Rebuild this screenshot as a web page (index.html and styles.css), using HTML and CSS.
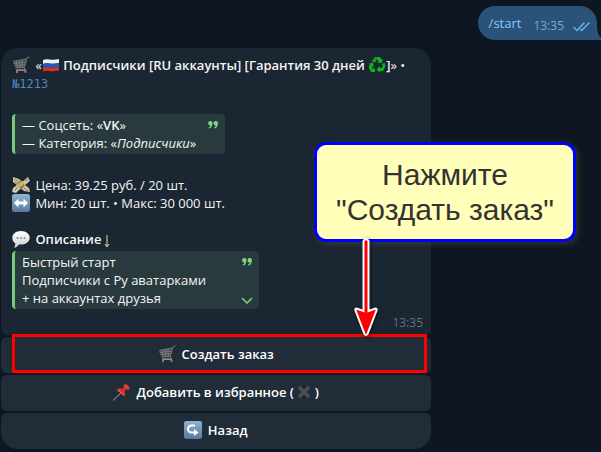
FILE: index.html
```
<!DOCTYPE html>
<html lang="ru">

<head>
    <meta charset="UTF-8" />
    <meta name="viewport" content="width=device-width, initial-scale=1.0" />
    <title>Чат с ботом</title>
    <link rel="stylesheet" href="styles.css">
</head>

<body>
    <!-- общие иконки -->
    <svg class="sprite" aria-hidden="true">
        <defs>
            <linearGradient id="key-fill" x1="0" y1="0" x2="0" y2="1">
                <stop offset="0" stop-color="#8fb4d3" />
                <stop offset="1" stop-color="#58799b" />
            </linearGradient>
            <linearGradient id="bubble-fill" x1="0" y1="0" x2="0" y2="1">
                <stop offset="0" stop-color="#ffffff" />
                <stop offset="1" stop-color="#cfcfcf" />
            </linearGradient>
        </defs>
        <symbol id="cart" viewBox="0 0 18 18">
            <path d="M1 5.5L14 3l-1.600 8.500-9 .5z" fill="#45484b" />
            <path d="M1 5.500L14 3M1.600 7.500l12-1.500M2.300 9.500l10.700-.800M3.400 12l9-.5M4 5l1.500 7M7 4.500L8 12M10 4l.3 7.800M17.500 1L15 1.800 12.400 11.500 13.500 14H4" fill="none" stroke="#85888a" stroke-width=".8" />
            <path d="M4 14.200h10" stroke="#b1aaa3" stroke-width="1" />
            <circle cx="5" cy="16" r="1.200" fill="#8f7770" />
            <circle cx="13.500" cy="15.800" r="1.200" fill="#8f7770" />
        </symbol>
        <symbol id="quote" viewBox="0 0 10 8">
            <path d="M2.300 0a2.200 2.200 0 0 1 2.200 2.400C4.500 5 3.200 7 1 7.500L.6 6.600C1.700 6 2.200 5.300 2.300 4.400A2.200 2.200 0 0 1 2.300 0zM7.700 0a2.200 2.200 0 0 1 2.200 2.400C9.900 5 8.600 7 6.400 7.500L6 6.600C7.100 6 7.600 5.300 7.700 4.400A2.200 2.200 0 0 1 7.700 0z" fill="#7fd67c" />
        </symbol>
    </svg>

    <main class="chat">
        <div class="message-out">
            <a class="command" href="#start">/start</a>
            <span class="time">13:35</span>
            <svg class="checks" viewBox="0 0 18 10"><path d="M1 5.500l3 3L11 1M7.500 7.500l1 1L16 1" fill="none" stroke="#65b5ef" stroke-width="1.500" stroke-linecap="round" /></svg>
            <svg class="tail" viewBox="0 0 6 14"><path d="M0 0c0 7 2 11 6 14H0z" /></svg>
        </div>

        <div class="message">
            <div class="bubble">
                <p class="title">
                    <svg class="emoji"><use href="#cart" /></svg>
                    «<svg class="emoji flag" viewBox="0 0 18 18"><path d="M1 4c4-2 8 1 16-1v4c-8 2-12-1-16 1z" fill="#f1f1f1" /><path d="M1 8c4-2 8 1 16-1v4c-8 2-12-1-16 1z" fill="#2457bd" /><path d="M1 12c4-2 8 1 16-1v3.500c-8 2-12-1-16 1z" fill="#d82f2a" /></svg>
                    <b>Подписчики [RU аккаунты] [Гарантия 30 дней</b>
                    <svg class="emoji recycle" viewBox="0 0 18 18"><g fill="#09b51c"><path d="M5 4l2-3h5l1.500 2.500 1.500-.8-1.500 4.600-4.500-1 1.500-.9L9 3 7.500 5.500z" /><path d="M5 4l2-3h2.500L6.800 6.800 3.500 5z" fill="#3d8b35" /><path d="M14 8l2.500-1.200 1 3.200-2.400 5H12v1.800L8.500 13.500 12 10v2h1.500l1.300-2z" /><path d="M7 16H3L.5 11 2 8.500.5 7.800 5 6.500l1 4.500-1.400-.8-.6 1 .8 1.300H7z" /></g></svg><b>]</b>» •
                </p>
                <p><code>№1213</code></p>
                <blockquote class="quote quote-short">
                    <svg class="quote-mark"><use href="#quote" /></svg>
                    — Соцсеть: «<b>VK</b>»<br>
                    — Категория: «<i>Подписчики</i>»
                </blockquote>
                <p class="gap">
                    <svg class="emoji" viewBox="0 0 18 18"><path d="M1 1l6 2 3 3 6-5 2 4-5 4 4 3 1 4-6-1-3-3-5 5-4-1 1-4 4-3-4-3z" fill="#cfc8aa" /><path d="M2 3l4 2M13 5l3-2M3 14l3-3M12 12l4 3M3 6l3 2" stroke="#777b68" /><path d="M5 7l4-3 4 6-4 4z" fill="#8c8467" /><path d="M6 8l4-3 2.500 2-4.500 4z" fill="#e7b442" /></svg>
                    Цена: 39.25 руб. / 20 шт.
                </p>
                <p>
                    <svg class="emoji" viewBox="0 0 18 18"><rect width="18" height="18" rx="2.500" fill="url(#key-fill)" /><path d="M2 9l4.500-4.500V7.500h5v-3L16 9l-4.500 4.500v-3h-5v3z" fill="#fff" /></svg>
                    Мин: 20 шт. • Макс: 30 000 шт.
                </p>
                <p class="gap-line">
                    <svg class="emoji" viewBox="0 0 18 18"><path d="M9 1c5 0 8.700 2.900 8.700 6.800S14 14.600 9 14.600c-.8 0-1.500 0-2.200-.2C5.800 16.500 4.300 17.500 2 17.500c1-1.200 1.500-2.500 1.200-4.200C1.300 12 .3 10 .3 7.800.300 3.900 4 1 9 1z" fill="url(#bubble-fill)" /><g fill="#85888c"><circle cx="5.500" cy="8" r="1" /><circle cx="9" cy="8" r="1" /><circle cx="12.500" cy="8" r="1" /></g></svg>
                    <b>Описание</b><svg class="arrow-down" viewBox="0 0 8 14"><path d="M4 1v11M2 10l2 3 2-3" fill="none" stroke="#ded9ad" /></svg>
                </p>
                <blockquote class="quote quote-long">
                    <svg class="quote-mark"><use href="#quote" /></svg>
                    Быстрый старт<br>
                    Подписчики с Ру аватарками<br>
                    + на аккаунтах друзья
                    <svg class="chevron" viewBox="0 0 12 7"><path d="M1 1l5 5 5-5" fill="none" stroke="#7fd67c" stroke-width="1.500" /></svg>
                </blockquote>
                <div class="time">13:35</div>
            </div>

            <div class="keyboard">
                <button class="key key-order" type="button">
                    <svg class="emoji"><use href="#cart" /></svg>
                    Создать заказ
                </button>
                <button class="key" type="button">
                    <svg class="emoji" viewBox="0 0 18 18"><path d="M8 10L0 17.500" stroke="#a6a6a6" stroke-width="1" /><path d="M11 1.500c2-2 6.500 2 5.500 4.500-.8 1-2 .7-3 .3L11.700 8.500c1 2 .8 4-.7 5L3.500 7C5 5 7 5 9 5.700L10.800 4c-.4-.9-.5-1.700.2-2.500z" fill="#cf302d" /><path d="M11.800 2.500l4 3.500M5 7l5.500 4.500" stroke="#ef6a62" /></svg>
                    Добавить в избранное (
                    <svg class="cross" viewBox="0 0 14 14"><path d="M3 3l8 8M11 3l-8 8" stroke="#4b4d4f" stroke-width="3.500" stroke-linecap="square" /></svg>
                    )
                </button>
                <button class="key key-last" type="button">
                    <svg class="emoji" viewBox="0 0 18 18"><rect width="18" height="18" rx="2.500" fill="url(#key-fill)" /><path d="M11 4.500H7.500a3.500 3.500 0 0 0 0 7H11" fill="none" stroke="#fff" stroke-width="2" /><path d="M10 8l4.500 3.500L10 15z" fill="#fff" /></svg>
                    Назад
                </button>
            </div>

            <div class="callout">
                Нажмите<br>"Создать заказ"
                <svg class="pointer" viewBox="0 0 24 102"><path d="M9.500 4q2.500-4 5 0v70l7-2.500q1.500 0 1 2L13.500 97q-1.500 2-3 0L1.500 73.500q-.5-2 1-2l7 2.500z" fill="#f00" stroke="#fff" stroke-width="2" /></svg>
            </div>
        </div>
    </main>
</body>

</html>
```
FILE: styles.css
```
* {
    box-sizing: border-box;
}

body {
    margin: 0;
    background-color: #0e1621;
    color: #f5f5f5;
    font-family: "Open Sans", "Noto Sans", sans-serif;
    font-size: 13px;
    line-height: 18px;
}

p {
    margin: 0;
}

b {
    font-weight: 600;
}

.sprite {
    position: absolute;
    width: 0;
    height: 0;
}

.chat {
    display: flex;
    flex-direction: column;
    gap: 8px;
    padding: 6px 4px 2px 1px;
}

.time {
    font-size: 12px;
}

/* исходящее сообщение */
.message-out {
    position: relative;
    align-self: flex-end;
    display: flex;
    gap: 12px;
    padding: 8px 6px 8px 11px;
    border-radius: 17px 17px 0 17px;
    background-color: #2b5278;
}

.command {
    color: #84c9ff;
    text-decoration: none;
}

.message-out .time {
    padding-top: 5px;
    line-height: 13px;
    color: #7da8d3;
}

.checks {
    width: 18px;
    height: 10px;
    margin: 8px 0 0 -3px;
}

.tail {
    position: absolute;
    right: -6px;
    bottom: 0;
    width: 6px;
    height: 14px;
    fill: #2b5278;
}

/* сообщение бота */
.message {
    position: relative;
    width: 100%;
    max-width: 430px;
}

.bubble {
    padding: 8px 8px 3px 11px;
    border-radius: 17px 17px 6px 6px;
    background-color: #1a2631;
}

.emoji {
    width: 18px;
    height: 18px;
    margin-right: 2px;
    vertical-align: top;
}

.flag,
.recycle {
    margin-right: 0;
}

.cross {
    width: 14px;
    height: 14px;
    vertical-align: -2px;
}

.title {
    white-space: nowrap;
}

code {
    color: #4f86bf;
    font-family: "DejaVu Sans Mono", "Liberation Mono", monospace;
    font-size: 12px;
}

.quote {
    position: relative;
    width: fit-content;
    margin: 0;
    padding: 2px 29px 2px 7px;
    border-left: 3px solid #78c97b;
    border-radius: 4px;
    background-color: #283a3d;
}

.quote-short {
    margin-top: 21px;
}

.quote-long {
    margin-top: 3px;
    padding-right: 53px;
}

.quote-mark {
    position: absolute;
    top: 7px;
    right: 7px;
    width: 10px;
    height: 8px;
}

.chevron {
    position: absolute;
    right: 6px;
    bottom: 5px;
    width: 12px;
    height: 7px;
}

.gap {
    margin-top: 22px;
}

.gap-line {
    margin-top: 18px;
}

.arrow-down {
    width: 8px;
    height: 14px;
    margin-left: 2px;
    vertical-align: -4px;
}

.bubble .time {
    padding-top: 5px;
    color: #62727f;
    text-align: right;
}

.keyboard {
    display: grid;
    gap: 2px;
    margin-top: 2px;
}

.key {
    position: relative;
    height: 36px;
    padding: 0 0 2px;
    border: 0;
    border-radius: 6px;
    background-color: #202c38;
    color: #fff;
    font: inherit;
    font-weight: 600;
    cursor: pointer;
}

.key:hover {
    background-color: #263543;
}

.key-last {
    border-radius: 6px 6px 17px 17px;
}

/* рамка вокруг нужной кнопки */
.key-order::after {
    content: "";
    position: absolute;
    inset: -3px 4px 0 11px;
    border: 3px solid #f00;
}

/* подсказка со стрелкой */
.callout {
    position: absolute;
    top: 94px;
    left: 313px;
    width: 262px;
    padding: 12px 0;
    border: 3px solid #00f;
    border-radius: 12px;
    background-color: #ffffb9;
    box-shadow: 2px 2px 6px rgba(80, 80, 70, .5);
    color: #333;
    font-family: "Liberation Sans", Arial, sans-serif;
    font-size: 30px;
    line-height: 35px;
    text-align: center;
    white-space: nowrap;
}

.pointer {
    position: absolute;
    top: 92px;
    left: 37px;
    width: 24px;
    height: 102px;
    filter: drop-shadow(1px 1px 2px rgba(0, 0, 0, .5));
}
```
